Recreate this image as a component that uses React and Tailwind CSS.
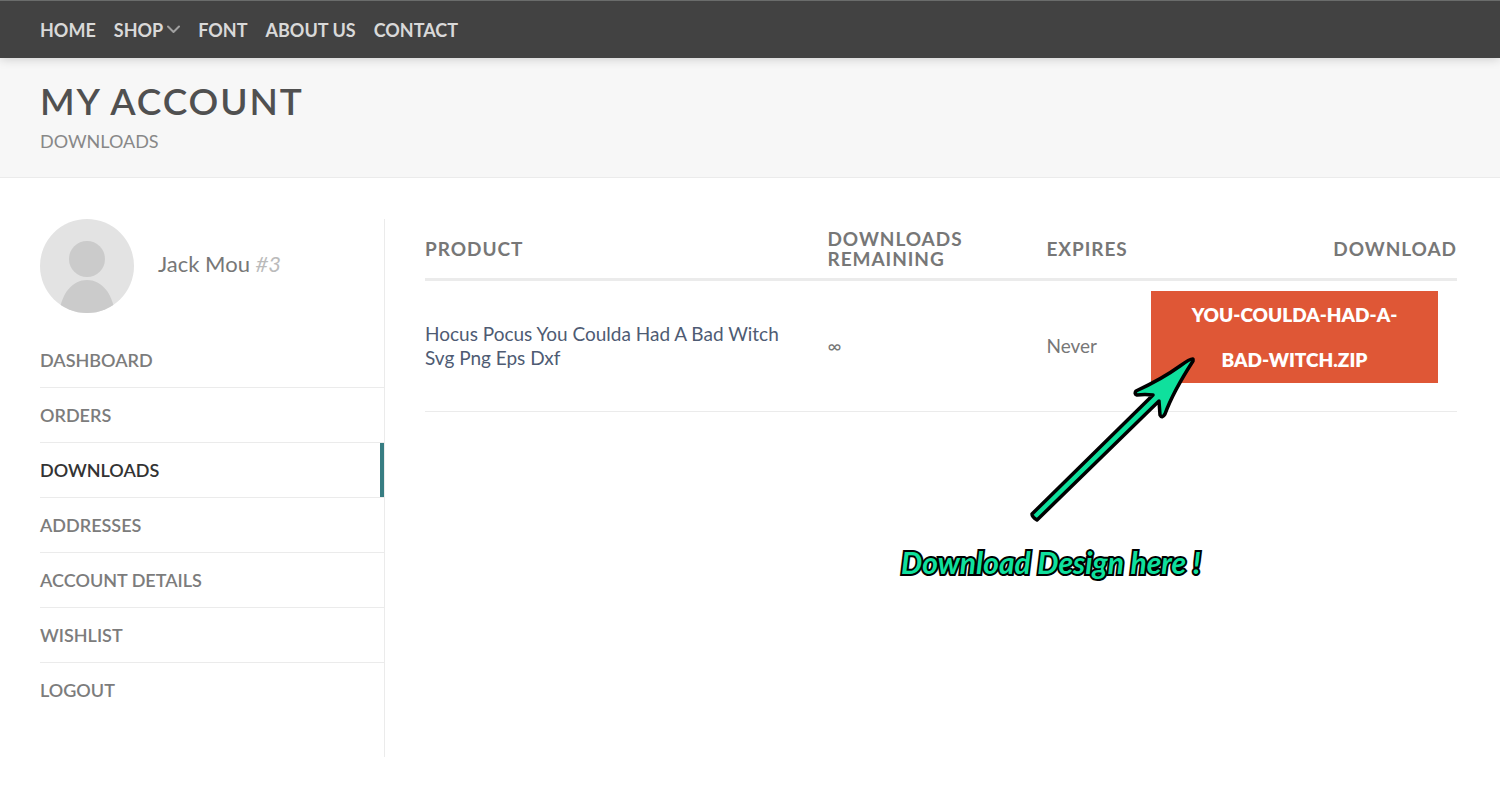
const navLinks = [
  { label: "Home" },
  { label: "Shop", hasMenu: true },
  { label: "Font" },
  { label: "About us" },
  { label: "Contact" },
]

const accountLinks = ["Dashboard", "Orders", "Downloads", "Addresses", "Account details", "Wishlist", "Logout"]

const downloads = [
  {
    id: 1,
    product: "Hocus Pocus You Coulda Had A Bad Witch Svg Png Eps Dxf",
    remaining: "∞",
    expires: "Never",
    file: "you-coulda-had-a-bad-witch.zip",
  },
]

function TopNav() {
  return (
    <header className="relative z-10 border-t border-[#6a6c6b] bg-[#424242] px-10 shadow-[0_1px_10px_rgba(0,0,0,0.18)]">
      <nav className="flex h-[57px] items-center gap-[18px]">
        {navLinks.map((link) => (
          <a key={link.label} href="#" className="flex items-center gap-1 text-lg font-bold uppercase text-[#d9d9d9]">
            {link.label}
            {link.hasMenu && (
              <svg viewBox="0 0 13 9" className="h-[9px] w-[13px]" fill="none" stroke="#a0a0a0" strokeWidth="2">
                <path d="M1 1.5l5.5 5.5L12 1.5" strokeLinecap="round" strokeLinejoin="round" />
              </svg>
            )}
          </a>
        ))}
      </nav>
    </header>
  )
}

function PageTitle() {
  return (
    <div className="border-b border-[#ebebeb] bg-[#f7f7f7] px-10 pt-[19px] pb-5">
      <h1 className="text-[37px] leading-12 font-semibold tracking-wider uppercase text-[#505050]">My account</h1>
      <p className="text-lg leading-8 uppercase text-[#888]">Downloads</p>
    </div>
  )
}

function Avatar() {
  return (
    <svg viewBox="0 0 94 94" className="h-[94px] w-[94px] shrink-0" aria-hidden="true">
      <clipPath id="avatar">
        <circle cx="47" cy="47" r="47" />
      </clipPath>
      <g clipPath="url(#avatar)">
        <rect width="94" height="94" fill="#e3e3e3" />
        <circle cx="47" cy="40" r="18" fill="#cbcbcb" />
        <path d="M19 94C22 73 33 61 47 61s25 12 28 33z" fill="#cbcbcb" />
      </g>
    </svg>
  )
}

function Sidebar() {
  return (
    <aside className="w-[345px] shrink-0 border-r border-[#ebebeb] pb-10">
      <div className="flex items-center gap-6">
        <Avatar />
        <p className="pb-1 text-[22px] leading-8 text-[#777]">
          Jack Mou <em className="text-[#bbb]">#3</em>
        </p>
      </div>
      <ul className="mt-5 divide-y divide-[#ebebeb]">
        {accountLinks.map((label) => (
          <li key={label}>
            <a
              href="#"
              className={`flex h-[54px] items-center text-lg font-semibold uppercase ${
                label === "Downloads" ? "border-r-4 border-[#377d82] text-[#333]" : "text-[#7c7c7c]"
              }`}
            >
              {label}
            </a>
          </li>
        ))}
      </ul>
    </aside>
  )
}

function DownloadsTable() {
  return (
    <table className="w-full table-fixed text-left text-[19px] text-[#777]">
      <thead>
        <tr className="border-b-3 border-[#ebebeb] leading-5 tracking-wider uppercase">
          <th className="w-[39%] pt-[10px] pb-[9px]">Product</th>
          <th className="w-[219px] pt-[10px] pr-10 pb-[9px]">Downloads remaining</th>
          <th className="w-[104px] pt-[10px] pb-[9px]">Expires</th>
          <th className="pt-[10px] pb-[9px] text-right">Download</th>
        </tr>
      </thead>
      <tbody>
        {downloads.map((item) => (
          <tr key={item.id} className="border-b border-[#ebebeb] leading-6">
            <td className="pr-8">
              <a href="#" className="text-[#4e5b73]">
                {item.product}
              </a>
            </td>
            <td>{item.remaining}</td>
            <td>{item.expires}</td>
            <td className="pt-[10px] pr-[19px] pb-7">
              <a
                href="#"
                className="ml-auto block w-[287px] bg-[#df5736] px-8 py-px text-center leading-[45px] font-extrabold uppercase text-white"
              >
                {item.file}
              </a>
            </td>
          </tr>
        ))}
      </tbody>
    </table>
  )
}

function Callout() {
  return (
    <div className="pointer-events-none absolute top-[135px] right-[250px] flex w-[306px] flex-col">
      <svg viewBox="0 0 168 168" className="ml-[128px] h-[168px] w-[168px]" aria-hidden="true">
        <path
          d="M164 5Q162 4 151 12Q133 25 107 37Q105 40 108 41Q116 40 124 41L3 160Q3 163 8 166L130 47L131 61Q133 65 136 60Q144 38 164 7Z"
          fill="#0fe09d"
          stroke="#000"
          strokeWidth="3.5"
          strokeLinejoin="round"
        />
      </svg>
      <p className="mt-5 text-[30px] leading-10 font-bold whitespace-nowrap italic text-[#0fe09d] [-webkit-text-stroke:4px_black] [paint-order:stroke_fill]">
        Download Design here !
      </p>
    </div>
  )
}

export default function App() {
  return (
    <div className="min-h-screen bg-white font-[Lato,sans-serif]">
      <TopNav />
      <PageTitle />
      <main className="flex pt-[41px] pr-[43px] pb-10 pl-10">
        <Sidebar />
        <section className="relative min-w-0 flex-1 pl-10">
          <DownloadsTable />
          <Callout />
        </section>
      </main>
    </div>
  )
}
